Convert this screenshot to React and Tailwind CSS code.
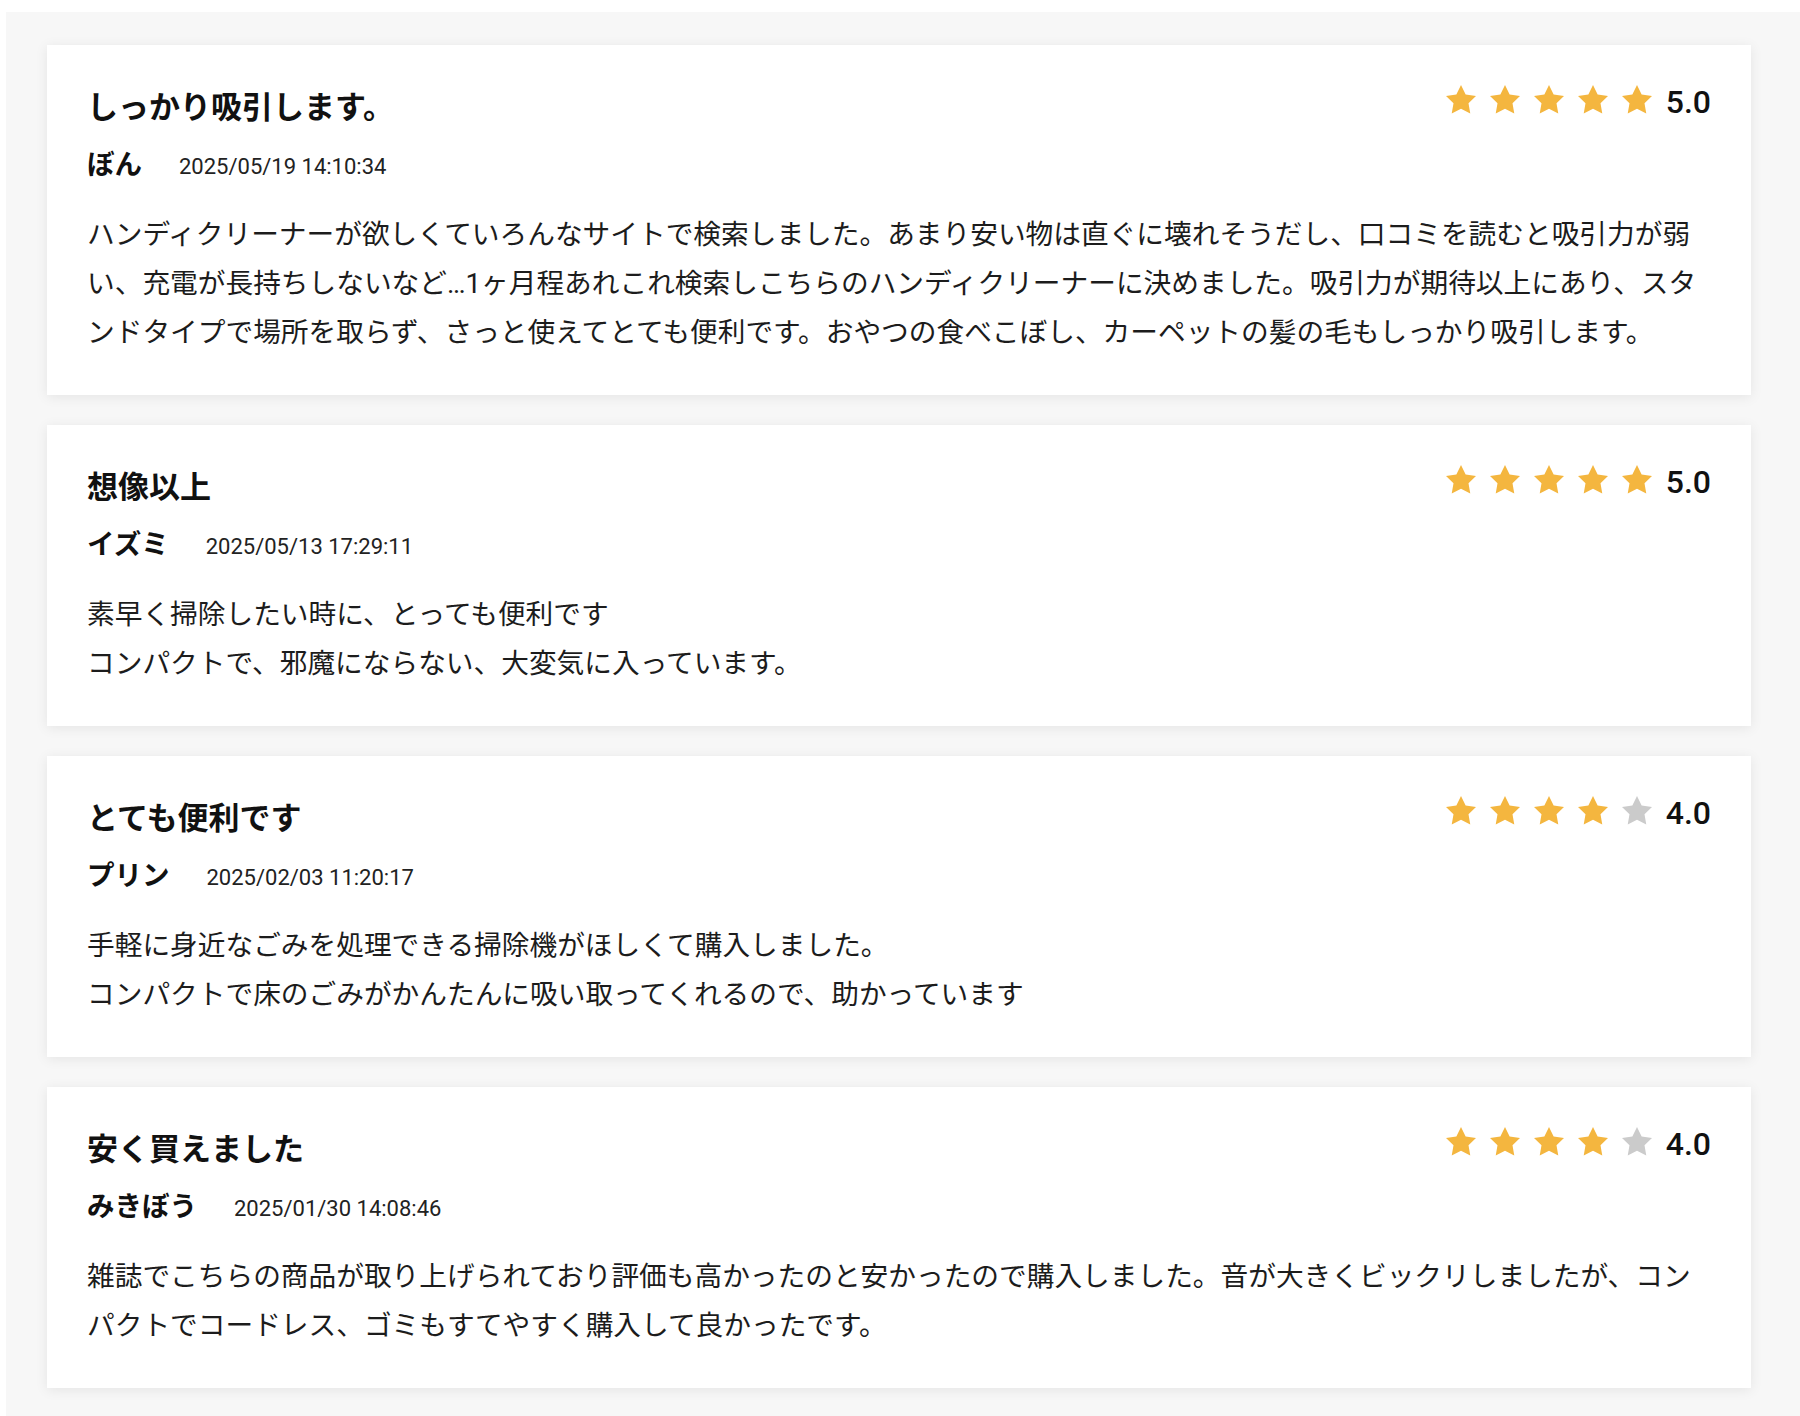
import React from "react";

const reviews = [
    {
        title: "しっかり吸引します。",
        name: "ぼん",
        date: "2025/05/19 14:10:34",
        rating: 5,
        body: "ハンディクリーナーが欲しくていろんなサイトで検索しました。あまり安い物は直ぐに壊れそうだし、口コミを読むと吸引力が弱い、充電が長持ちしないなど…1ヶ月程あれこれ検索しこちらのハンディクリーナーに決めました。吸引力が期待以上にあり、スタンドタイプで場所を取らず、さっと使えてとても便利です。おやつの食べこぼし、カーペットの髪の毛もしっかり吸引します。",
    },
    {
        title: "想像以上",
        name: "イズミ",
        date: "2025/05/13 17:29:11",
        rating: 5,
        body: "素早く掃除したい時に、とっても便利です\nコンパクトで、邪魔にならない、大変気に入っています。",
    },
    {
        title: "とても便利です",
        name: "プリン",
        date: "2025/02/03 11:20:17",
        rating: 4,
        body: "手軽に身近なごみを処理できる掃除機がほしくて購入しました。\nコンパクトで床のごみがかんたんに吸い取ってくれるので、助かっています",
    },
    {
        title: "安く買えました",
        name: "みきぼう",
        date: "2025/01/30 14:08:46",
        rating: 4,
        body: "雑誌でこちらの商品が取り上げられており評価も高かったのと安かったので購入しました。音が大きくビックリしましたが、コンパクトでコードレス、ゴミもすてやすく購入して良かったです。",
    },
];

const Star = ({ filled }) => (
    <svg viewBox="0 0 24 24" className="w-[36px] h-[36px]">
        <polygon
            points="12,2 15.09,8.26 22,9.27 17,14.14 18.18,21.02 12,17.77 5.82,21.02 7,14.14 2,9.27 8.91,8.26"
            fill={filled ? "#f4b63f" : "#cbcbcb"}
        />
    </svg>
);

const ReviewCard = ({ review }) => {
    return (
        <div className="bg-white shadow-[0_2px_12px_rgba(0,0,0,0.08)] px-10 pt-[42px] pb-[38px]">
            {/* Title + rating */}
            <div className="flex items-start justify-between">
                <h3 className="text-[31px] leading-[42px] font-bold text-[#111]">{review.title}</h3>
                <div className="flex items-center h-[36px] -mt-[3px]">
                    <div className="flex items-center gap-[8px] mb-[5px]">
                        {[1, 2, 3, 4, 5].map((i) => (
                            <Star key={i} filled={i <= review.rating} />
                        ))}
                    </div>
                    <span className="ml-[11px] text-[32px] leading-[36px] font-medium text-[#111] font-['Roboto']">
                        {review.rating.toFixed(1)}
                    </span>
                </div>
            </div>

            {/* Name + date */}
            <div className="mt-[15px] flex items-baseline gap-[37px]">
                <span className="text-[27.5px] leading-[42px] font-bold text-[#111]">{review.name}</span>
                <span className="text-[22px] text-[#222] font-['Roboto']">{review.date}</span>
            </div>

            {/* Body */}
            <p className="mt-6 text-[27.7px] leading-[49px] text-[#1c1c1c] whitespace-pre-line">
                {review.body}
            </p>
        </div>
    );
};

const App = () => {
    return (
        <div className="min-h-screen bg-white pl-[6px] pt-[12px] font-['Roboto','Noto_Sans_CJK_JP',sans-serif]">
            <div className="min-h-[1404px] bg-[#f7f7f7] pl-[41px] pr-[49px] pt-[33px] pb-[30px] flex flex-col gap-[30px]">
                {reviews.map((review, idx) => (
                    <ReviewCard key={idx} review={review} />
                ))}
            </div>
        </div>
    );
};

export default App;
